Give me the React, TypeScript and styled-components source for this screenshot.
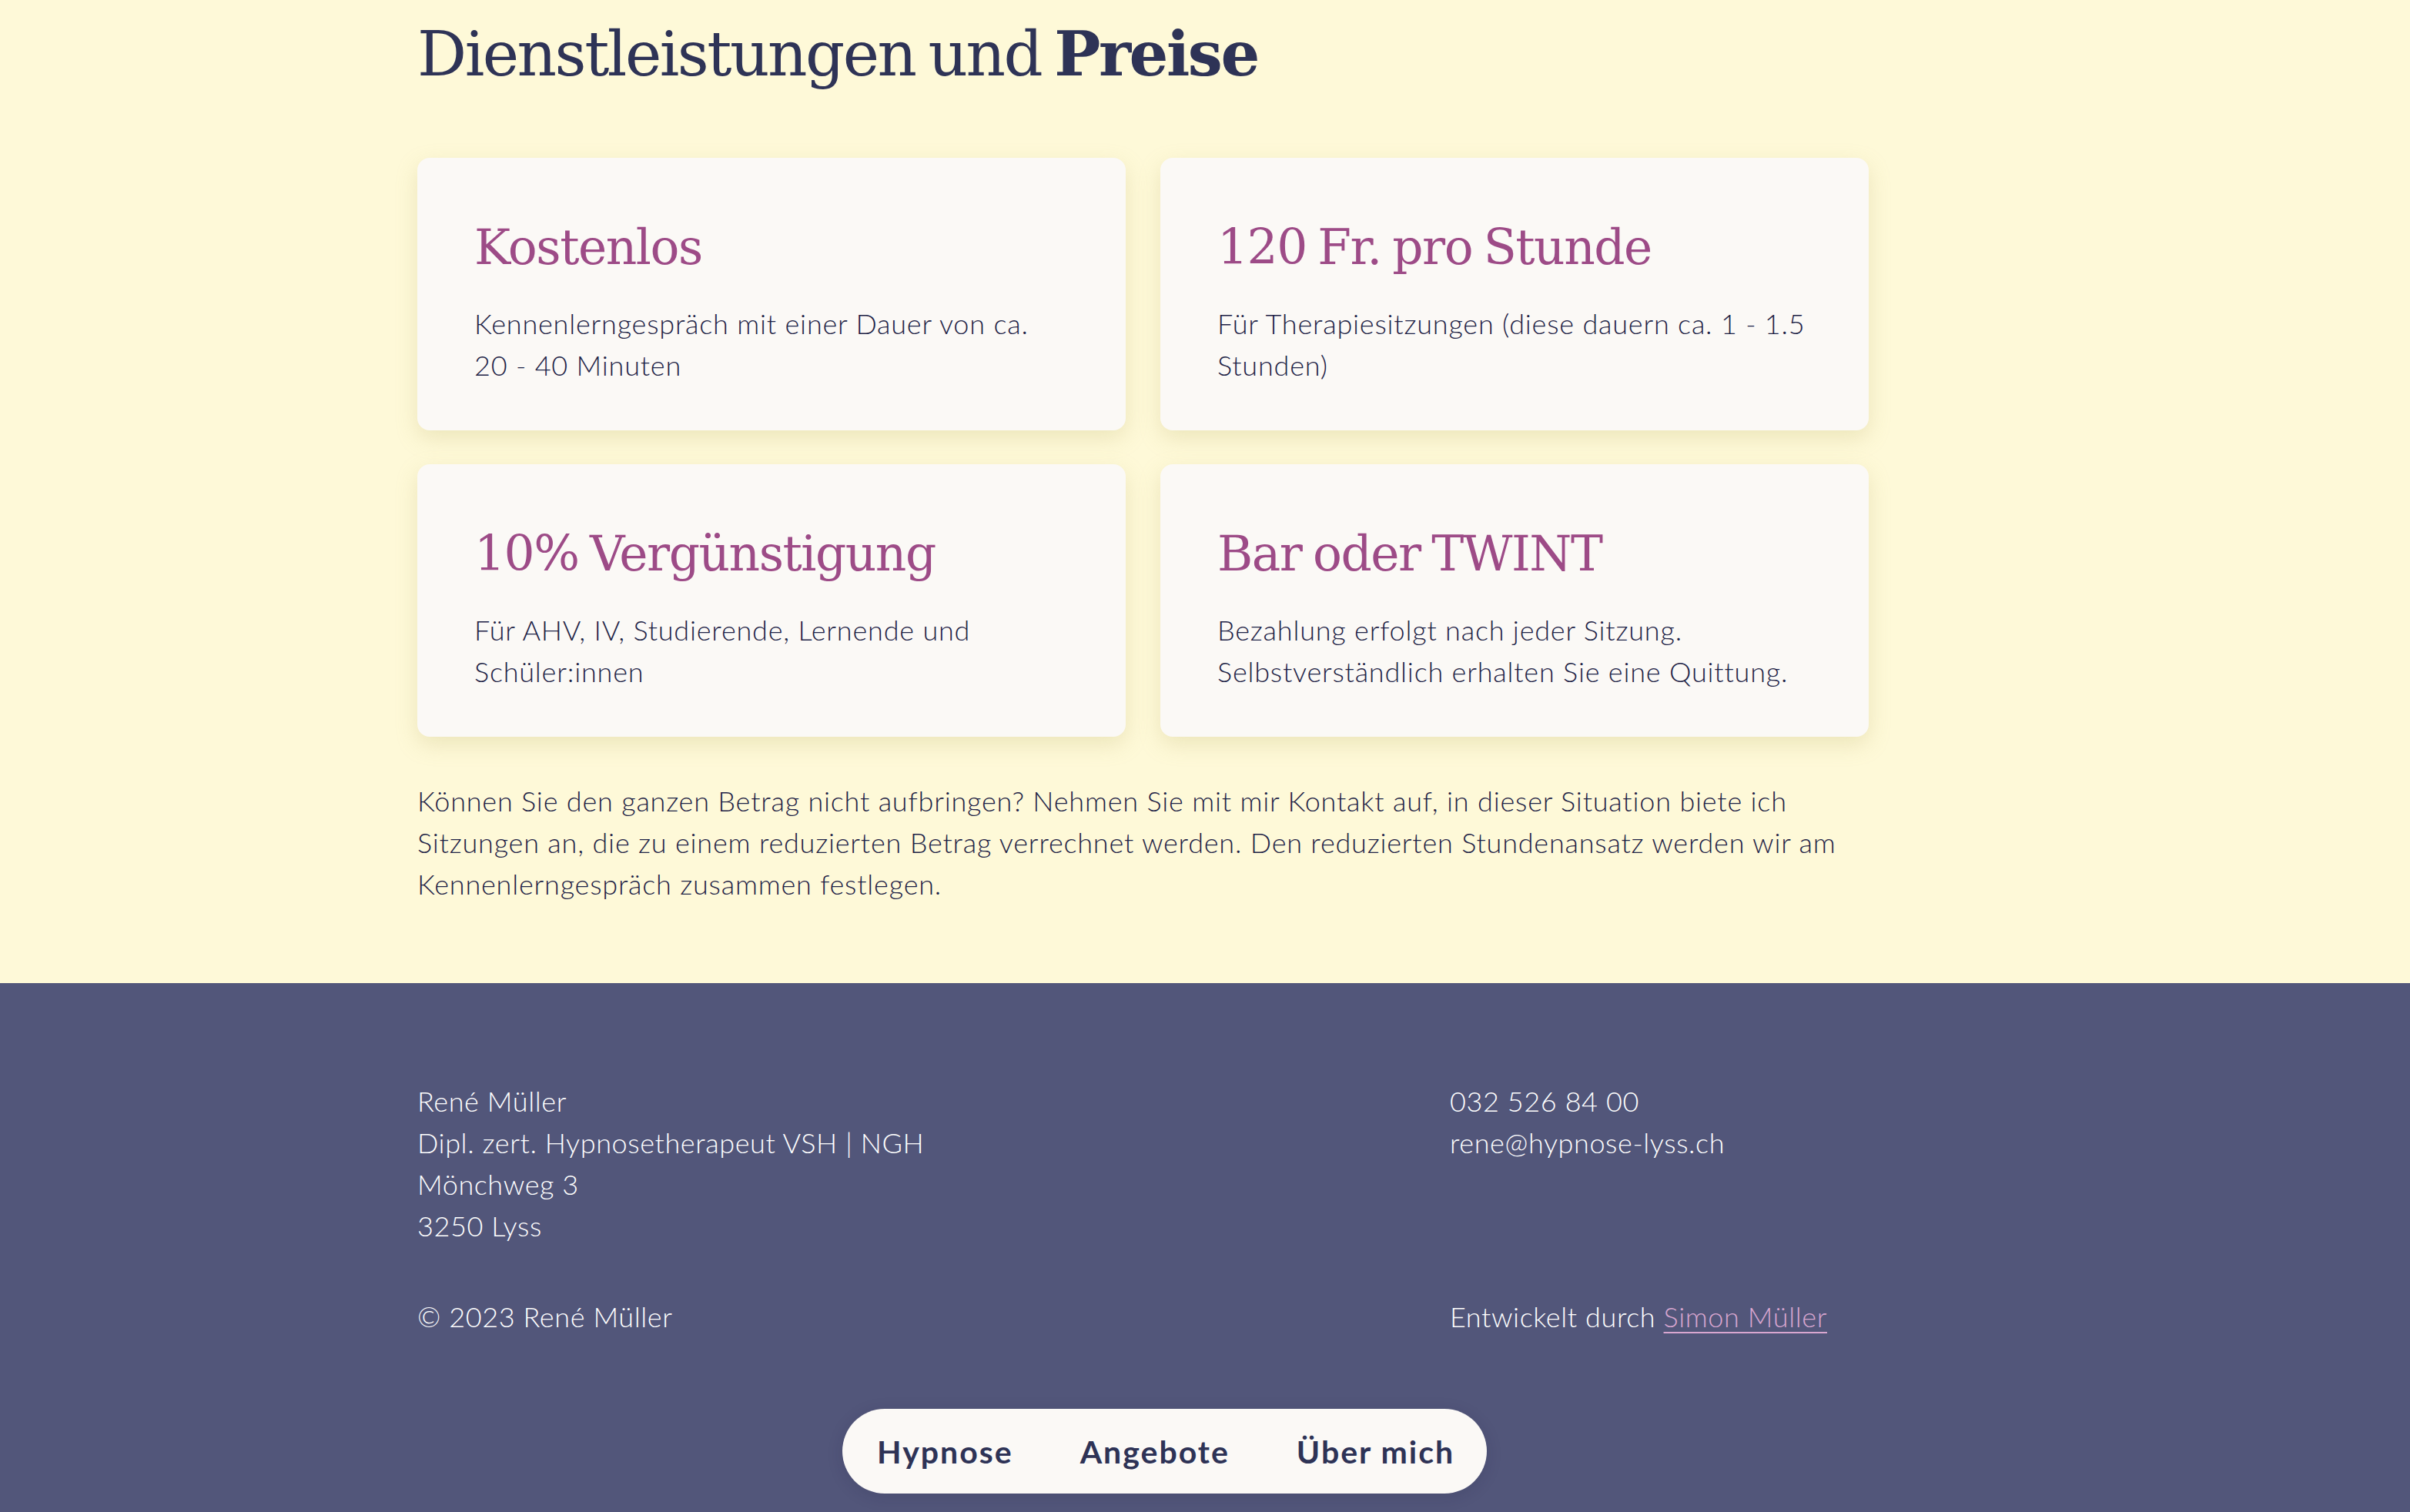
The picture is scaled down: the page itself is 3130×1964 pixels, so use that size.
import React from "react";
import styled, { createGlobalStyle } from "styled-components";

const GlobalStyle = createGlobalStyle`
  html, body {
    margin: 0;
    padding: 0;
    background: #fef9d8;
  }
  body {
    font-family: "Lato", "Open Sans", sans-serif;
    color: #2e3356;
  }
  * { box-sizing: border-box; }
`;

const Page = styled.div`
  min-height: 1964px;
  display: flex;
  flex-direction: column;
  position: relative;
`;

const Section = styled.section`
  background: #fef9d8;
  padding: 22px 0 102px 542px;
`;

const Container = styled.div`
  width: 1890px;
`;

const Heading = styled.h2`
  margin: 0 0 86px 0;
  font-family: "DejaVu Serif", "Liberation Serif", serif;
  font-weight: 400;
  font-size: 80px;
  line-height: 96px;
  color: #2e3356;
  letter-spacing: -2.5px;
  word-spacing: -6px;
  b { font-weight: 700; }
`;

const Grid = styled.div`
  display: grid;
  grid-template-columns: 920px 920px;
  column-gap: 45px;
  row-gap: 44px;
`;

const Card = styled.div`
  background: #fbf9f6;
  border-radius: 16px;
  box-shadow: 0 10px 28px rgba(190, 180, 110, 0.28);
  padding: 78px 50px 58px 74px;
`;

const CardTitle = styled.h3`
  margin: 0 0 33px 0;
  font-family: "DejaVu Serif", "Liberation Serif", serif;
  font-weight: 400;
  font-size: 63px;
  line-height: 77px;
  color: #9d4b87;
  letter-spacing: -1.5px;
  word-spacing: -4px;
`;

const Text = styled.p`
  margin: 0;
  font-size: 36px;
  line-height: 54px;
  font-weight: 300;
  letter-spacing: 0.8px;
  color: #1e2346;
  white-space: pre-line;
`;

const Note = styled(Text)`
  margin-top: 56px;
`;

const Footer = styled.footer`
  flex: 1;
  background: #52567a;
  color: #ffffff;
  padding: 126px 0 228px 542px;
  position: relative;
`;

const FooterGrid = styled.div`
  display: grid;
  grid-template-columns: 1341px 1fr;
  width: 1890px;
  row-gap: 64px;
`;

const FooterText = styled.div`
  font-size: 36px;
  line-height: 54px;
  font-weight: 300;
  letter-spacing: 0.6px;
  color: #ffffff;
`;

const FooterLink = styled.a`
  color: #d8a6d0;
  text-decoration: underline;
  text-underline-offset: 6px;
  text-decoration-thickness: 2px;
`;

const Nav = styled.nav`
  position: absolute;
  bottom: 25px;
  left: 1094px;
  height: 110px;
  border-radius: 55px;
  background: #fbf9f6;
  display: flex;
  align-items: center;
  box-shadow: 0 4px 20px rgba(30, 30, 60, 0.15);
`;

const NavItem = styled.a`
  font-size: 41px;
  font-weight: 700;
  letter-spacing: 2px;
  color: #2e3356;
  text-decoration: none;
  padding: 0 42px 0 45px;
`;

const cards = [
  { title: "Kostenlos", text: "Kennenlerngespräch mit einer Dauer von ca.\n20 - 40 Minuten" },
  { title: "120 Fr. pro Stunde", text: "Für Therapiesitzungen (diese dauern ca. 1 - 1.5\nStunden)" },
  { title: "10% Vergünstigung", text: "Für AHV, IV, Studierende, Lernende und\nSchüler:innen" },
  { title: "Bar oder TWINT", text: "Bezahlung erfolgt nach jeder Sitzung.\nSelbstverständlich erhalten Sie eine Quittung." },
];

const note =
  "Können Sie den ganzen Betrag nicht aufbringen? Nehmen Sie mit mir Kontakt auf, in dieser Situation biete ich\n" +
  "Sitzungen an, die zu einem reduzierten Betrag verrechnet werden. Den reduzierten Stundenansatz werden wir am\n" +
  "Kennenlerngespräch zusammen festlegen.";

export default function App() {
  return (
    <>
      <GlobalStyle />
      <Page>
        <Section>
          <Container>
            <Heading>
              Dienstleistungen und <b>Preise</b>
            </Heading>
            <Grid>
              {cards.map((c) => (
                <Card key={c.title}>
                  <CardTitle>{c.title}</CardTitle>
                  <Text>{c.text}</Text>
                </Card>
              ))}
            </Grid>
            <Note>{note}</Note>
          </Container>
        </Section>
        <Footer>
          <FooterGrid>
            <FooterText>
              René Müller
              <br />
              Dipl. zert. Hypnosetherapeut VSH | NGH
              <br />
              Mönchweg 3
              <br />
              3250 Lyss
            </FooterText>
            <FooterText>
              032 526 84 00
              <br />
              rene@hypnose-lyss.ch
            </FooterText>
            <FooterText>© 2023 René Müller</FooterText>
            <FooterText>
              Entwickelt durch <FooterLink href="#">Simon Müller</FooterLink>
            </FooterText>
          </FooterGrid>
          <Nav>
            <NavItem href="#">Hypnose</NavItem>
            <NavItem href="#">Angebote</NavItem>
            <NavItem href="#">Über mich</NavItem>
          </Nav>
        </Footer>
      </Page>
    </>
  );
}
